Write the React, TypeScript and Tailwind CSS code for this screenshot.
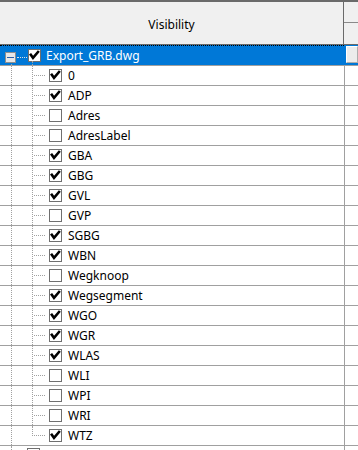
import React from "react";

type Layer = { name: string; on: boolean };

const layers: Layer[] = [
  { name: "0", on: true },
  { name: "ADP", on: true },
  { name: "Adres", on: false },
  { name: "AdresLabel", on: false },
  { name: "GBA", on: true },
  { name: "GBG", on: true },
  { name: "GVL", on: true },
  { name: "GVP", on: false },
  { name: "SGBG", on: true },
  { name: "WBN", on: true },
  { name: "Wegknoop", on: false },
  { name: "Wegsegment", on: true },
  { name: "WGO", on: true },
  { name: "WGR", on: true },
  { name: "WLAS", on: true },
  { name: "WLI", on: false },
  { name: "WPI", on: false },
  { name: "WRI", on: false },
  { name: "WTZ", on: true },
];

function Check({ on }: { on: boolean }) {
  return (
    <span className="flex h-[13px] w-[13px] shrink-0 items-center justify-center border border-[#6f6f6f] bg-white">
      {on && (
        <svg width="11" height="11" viewBox="0 0 11 11">
          <path d="M1.8 4.8 L4 7.8 L9 2" fill="none" stroke="#000" strokeWidth="2.6" strokeLinecap="square" />
        </svg>
      )}
    </span>
  );
}

// right-hand column cell
function Side() {
  return <div className="w-[13px] shrink-0 border-l border-[#a0a0a0]" />;
}

export default function App() {
  return (
    <div
      className="h-[450px] w-[358px] overflow-hidden bg-white text-[12px] text-black"
      style={{ fontFamily: '"Noto Sans", "Segoe UI", sans-serif' }}
    >
      {/* header */}
      <div className="flex h-[45px] border-t-2 border-b border-t-[#6a6a6a] border-b-[#6a6a6a] bg-[#f0f0f0]">
        <div className="flex w-[344px] items-center justify-center border-r border-[#6a6a6a] pt-[3px]">Visibility</div>
        <div className="flex flex-1 flex-col">
          <div className="h-[21px] border-b border-[#8a8a8a]" />
          <div className="flex-1" />
        </div>
      </div>

      {/* drawing row */}
      <div className="flex h-[21px] border-b border-[#a0a0a0]">
        <div className="relative flex w-[344px] items-center border-t border-dotted border-black bg-[#0078d7] pl-[28px]">
          <span className="absolute left-[5px] top-[6px] flex h-[11px] w-[11px] items-center justify-center border border-[#8f8f8f] bg-[#e8e8e8]">
            <span className="h-[1px] w-[7px] bg-[#2b5fa8]" />
          </span>
          <span className="absolute left-[17px] top-[11px] w-[10px] border-t border-dotted border-[#e0e0e0]" />
          <span className="absolute bottom-0 left-[11px] top-[18px] border-l border-dotted border-[#a0a0a0]" />
          <span className="absolute bottom-0 left-[32px] top-[15px] border-l border-dotted border-[#a0a0a0]" />
          <Check on />
          <span className="ml-[5px] text-white">Export_GRB.dwg</span>
        </div>
        <div className="w-[14px] shrink-0 bg-[#0078d7] pl-[2px] pt-[1px]">
          <div className="h-[17px] border border-[#adadad] border-l-white border-t-white bg-[#ececec]" />
        </div>
      </div>

      {/* layers */}
      {layers.map((l, i) => {
        const last = i === layers.length - 1;
        return (
          <div key={l.name} className="flex h-[20px] border-b border-[#a0a0a0]">
            <div className="relative flex w-[344px] items-center pl-[49px]">
              <span className="absolute bottom-0 left-[11px] top-0 border-l border-dotted border-[#a0a0a0]" />
              <span
                className={`absolute left-[32px] top-0 border-l border-dotted border-[#a0a0a0] ${last ? "h-[10px]" : "bottom-0"}`}
              />
              <span className="absolute left-[34px] top-[9px] w-[11px] border-t border-dotted border-[#a0a0a0]" />
              <Check on={l.on} />
              <span className="ml-[6px]">{l.name}</span>
            </div>
            <Side />
          </div>
        );
      })}

      {/* next drawing, cut off */}
      <div className="flex h-[20px]">
        <div className="relative flex w-[344px] pl-[27px] pt-[2px]">
          <span className="absolute bottom-0 left-[11px] top-0 border-l border-dotted border-[#a0a0a0]" />
          <Check on={false} />
        </div>
        <Side />
      </div>
    </div>
  );
}
